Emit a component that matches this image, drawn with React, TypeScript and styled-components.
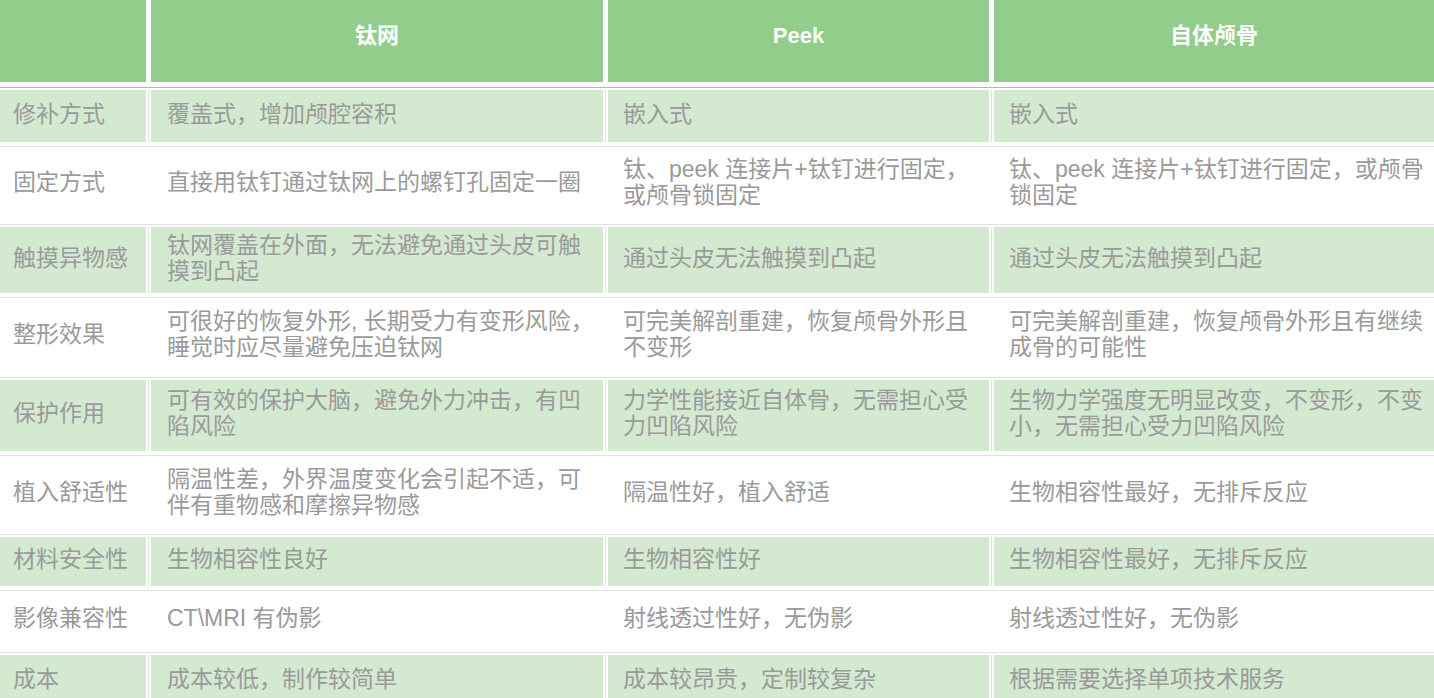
import React from "react";
import styled, { createGlobalStyle } from "styled-components";

const Global = createGlobalStyle`
  html, body {
    margin: 0;
    padding: 0;
    background: #ffffff;
    overflow: hidden;
  }
  body {
    font-family: "Liberation Sans", "Noto Sans CJK SC", sans-serif;
  }
`;

const Table = styled.div`
  width: 1434px;
  display: flex;
  flex-direction: column;
`;

const cols = "148px 457px 386px 1fr";

const HeaderRow = styled.div`
  display: grid;
  grid-template-columns: ${cols};
  height: 87px;
  padding-bottom: 5px;
  box-sizing: border-box;
`;

const Row = styled.div<{ $h: number; $first?: boolean }>`
  display: grid;
  grid-template-columns: ${cols};
  height: ${(p) => p.$h}px;
  box-sizing: border-box;
  border-top: 1px solid ${(p) => (p.$first ? "#93cd8b" : "#dfe3de")};
  padding: 2px 0 4px;
`;

const Slot = styled.div<{ $idx: number; $lined: boolean }>`
  display: flex;
  box-sizing: border-box;
  padding-left: ${(p) => (p.$idx === 0 ? 0 : 2)}px;
  padding-right: ${(p) => (p.$idx === 3 ? 0 : 2)}px;
  border-left: ${(p) =>
    p.$idx === 0 ? "none" : p.$lined ? "1px solid #dfe3de" : "1px solid #ffffff"};
`;

const HeadCell = styled.div`
  flex: 1;
  background: #93cd8b;
  color: #ffffff;
  font-weight: bold;
  font-size: 22px;
  line-height: 26px;
  display: flex;
  align-items: center;
  justify-content: center;
  padding-bottom: 10px;
`;

const padL = [13, 16, 15, 15];
const padR = [4, 8, 12, 6];

const Cell = styled.div<{ $tint: boolean; $idx: number }>`
  flex: 1;
  background: ${(p) => (p.$tint ? "#d3e9d0" : "#ffffff")};
  color: #9a9a9a;
  font-size: 23px;
  line-height: 26px;
  display: flex;
  align-items: center;
  padding: 0 ${(p) => padR[p.$idx]}px 5px ${(p) => padL[p.$idx]}px;
  box-sizing: border-box;
  word-break: break-all;
`;

const headers = ["", "钛网", "Peek", "自体颅骨"];

const rows: { h: number; cells: string[] }[] = [
  { h: 59, cells: ["修补方式", "覆盖式，增加颅腔容积", "嵌入式", "嵌入式"] },
  {
    h: 78,
    cells: [
      "固定方式",
      "直接用钛钉通过钛网上的螺钉孔固定一圈",
      "钛、peek 连接片+钛钉进行固定，或颅骨锁固定",
      "钛、peek 连接片+钛钉进行固定，或颅骨锁固定",
    ],
  },
  {
    h: 73,
    cells: [
      "触摸异物感",
      "钛网覆盖在外面，无法避免通过头皮可触摸到凸起",
      "通过头皮无法触摸到凸起",
      "通过头皮无法触摸到凸起",
    ],
  },
  {
    h: 80,
    cells: [
      "整形效果",
      "可很好的恢复外形, 长期受力有变形风险，睡觉时应尽量避免压迫钛网",
      "可完美解剖重建，恢复颅骨外形且不变形",
      "可完美解剖重建，恢复颅骨外形且有继续成骨的可能性",
    ],
  },
  {
    h: 78,
    cells: [
      "保护作用",
      "可有效的保护大脑，避免外力冲击，有凹陷风险",
      "力学性能接近自体骨，无需担心受力凹陷风险",
      "生物力学强度无明显改变，不变形，不变小，无需担心受力凹陷风险",
    ],
  },
  {
    h: 79,
    cells: [
      "植入舒适性",
      "隔温性差，外界温度变化会引起不适，可伴有重物感和摩擦异物感",
      "隔温性好，植入舒适",
      "生物相容性最好，无排斥反应",
    ],
  },
  {
    h: 56,
    cells: ["材料安全性", "生物相容性良好", "生物相容性好", "生物相容性最好，无排斥反应"],
  },
  {
    h: 62,
    cells: ["影像兼容性", "CT\\MRI 有伪影", "射线透过性好，无伪影", "射线透过性好，无伪影"],
  },
  {
    h: 60,
    cells: ["成本", "成本较低，制作较简单", "成本较昂贵，定制较复杂", "根据需要选择单项技术服务"],
  },
];

export default function App() {
  return (
    <>
      <Global />
      <Table>
        <HeaderRow>
          {headers.map((h, i) => (
            <Slot key={i} $idx={i} $lined={false}>
              <HeadCell>{h}</HeadCell>
            </Slot>
          ))}
        </HeaderRow>
        {rows.map((r, ri) => {
          const tint = ri % 2 === 0;
          return (
            <Row key={ri} $h={r.h} $first={ri === 0}>
              {r.cells.map((c, ci) => (
                <Slot key={ci} $idx={ci} $lined={tint}>
                  <Cell $tint={tint} $idx={ci}>
                    {c}
                  </Cell>
                </Slot>
              ))}
            </Row>
          );
        })}
      </Table>
    </>
  );
}
